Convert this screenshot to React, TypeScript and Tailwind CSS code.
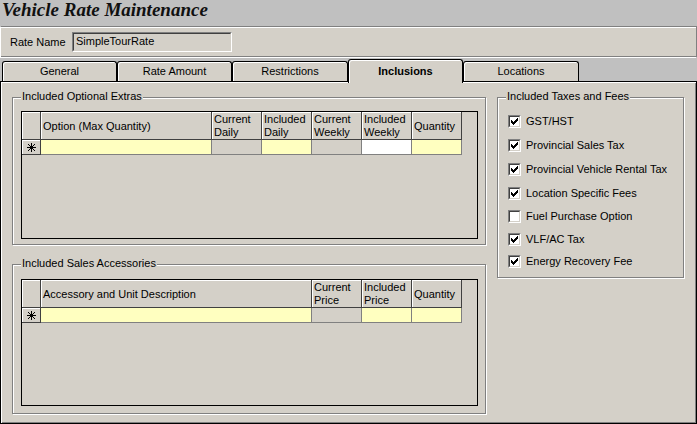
import React from "react";

function Asterisk() {
  return (
    <svg width="9" height="9" viewBox="0 0 9 9" shapeRendering="crispEdges">
      <rect x="4" y="0" width="1" height="9" fill="#000" />
      <rect x="0" y="4" width="9" height="1" fill="#000" />
      <rect x="3" y="3" width="3" height="3" fill="#000" />
      <rect x="1" y="1" width="1" height="1" fill="#000" />
      <rect x="2" y="2" width="1" height="1" fill="#000" />
      <rect x="6" y="6" width="1" height="1" fill="#000" />
      <rect x="7" y="7" width="1" height="1" fill="#000" />
      <rect x="7" y="1" width="1" height="1" fill="#000" />
      <rect x="6" y="2" width="1" height="1" fill="#000" />
      <rect x="2" y="6" width="1" height="1" fill="#000" />
      <rect x="1" y="7" width="1" height="1" fill="#000" />
    </svg>
  );
}

function Check() {
  return (
    <svg width="7" height="7" viewBox="0 0 7 7" shapeRendering="crispEdges">
      <rect x="6" y="0" width="1" height="1" fill="#000" />
      <rect x="5" y="1" width="2" height="1" fill="#000" />
      <rect x="0" y="2" width="1" height="1" fill="#000" />
      <rect x="4" y="2" width="3" height="1" fill="#000" />
      <rect x="0" y="3" width="2" height="1" fill="#000" />
      <rect x="3" y="3" width="3" height="1" fill="#000" />
      <rect x="0" y="4" width="5" height="1" fill="#000" />
      <rect x="1" y="5" width="3" height="1" fill="#000" />
      <rect x="2" y="6" width="1" height="1" fill="#000" />
    </svg>
  );
}

type Col = { label: string[]; w: string; bg: string };

const extrasCols: Col[] = [
  { label: ["Option (Max Quantity)"], w: "w-[171px]", bg: "bg-[#ffffc0]" },
  { label: ["Current", "Daily"], w: "w-[50px]", bg: "bg-[#d4d0c8]" },
  { label: ["Included", "Daily"], w: "w-[50px]", bg: "bg-[#ffffc0]" },
  { label: ["Current", "Weekly"], w: "w-[50px]", bg: "bg-[#d4d0c8]" },
  { label: ["Included", "Weekly"], w: "w-[50px]", bg: "bg-white" },
  { label: ["Quantity"], w: "w-[50px]", bg: "bg-[#ffffc0]" },
];

const accCols: Col[] = [
  { label: ["Accessory and Unit Description"], w: "w-[271px]", bg: "bg-[#ffffc0]" },
  { label: ["Current", "Price"], w: "w-[50px]", bg: "bg-[#d4d0c8]" },
  { label: ["Included", "Price"], w: "w-[50px]", bg: "bg-[#ffffc0]" },
  { label: ["Quantity"], w: "w-[50px]", bg: "bg-[#ffffc0]" },
];

function Grid({ cols, h }: { cols: Col[]; h: string }) {
  return (
    <div className={`w-[457px] ${h} border border-black bg-[#d4d0c8]`}>
      <div className="flex h-[28px]">
        <div className="w-[19px] shrink-0 border-r border-b border-[#404040] shadow-[inset_1px_1px_0_#fff]" />
        {cols.map((c, i) => (
          <div
            key={i}
            className={`${c.w} shrink-0 border-r border-b border-[#404040] shadow-[inset_1px_1px_0_#fff] flex flex-col justify-center pl-[2px] pt-[1px] leading-[13px]`}
          >
            {c.label.map((l, j) => (
              <span key={j} className="whitespace-nowrap">
                {l}
              </span>
            ))}
          </div>
        ))}
      </div>
      <div className="flex h-[15px]">
        <div className="w-[19px] shrink-0 border-r border-b border-[#404040] shadow-[inset_1px_1px_0_#fff] flex items-center justify-center">
          <Asterisk />
        </div>
        {cols.map((c, i) => (
          <div key={i} className={`${c.w} ${c.bg} shrink-0 border-r border-b border-[#808080]`} />
        ))}
      </div>
    </div>
  );
}

function GroupBox({
  label,
  className,
  children,
}: {
  label: string;
  className: string;
  children: React.ReactNode;
}) {
  return (
    <div
      className={`relative border border-[#808080] shadow-[inset_1px_1px_0_#fff,1px_1px_0_#fff] ${className}`}
    >
      <span className="absolute left-[8px] top-[-8px] bg-[#d4d0c8] px-[1px] leading-[13px] whitespace-nowrap">
        {label}
      </span>
      {children}
    </div>
  );
}

const taxes: { label: string; checked: boolean; h: string }[] = [
  { label: "GST/HST", checked: true, h: "h-[24px]" },
  { label: "Provincial Sales Tax", checked: true, h: "h-[24px]" },
  { label: "Provincial Vehicle Rental Tax", checked: true, h: "h-[24px]" },
  { label: "Location Specific Fees", checked: true, h: "h-[24px]" },
  { label: "Fuel Purchase Option", checked: false, h: "h-[23px]" },
  { label: "VLF/AC Tax", checked: true, h: "h-[22px]" },
  { label: "Energy Recovery Fee", checked: true, h: "h-[22px]" },
];

function CheckBox({ checked }: { checked: boolean }) {
  return (
    <div className="w-[13px] h-[13px] shrink-0 border border-t-[#808080] border-l-[#808080] border-b-white border-r-white">
      <div className="w-[11px] h-[11px] border border-t-[#404040] border-l-[#404040] border-b-[#d4d0c8] border-r-[#d4d0c8] bg-white flex items-center justify-center">
        {checked && <Check />}
      </div>
    </div>
  );
}

const tabs = [
  { label: "General", w: "w-[115px]" },
  { label: "Rate Amount", w: "w-[115px]" },
  { label: "Restrictions", w: "w-[116px]" },
  { label: "Inclusions", w: "w-[115px]", active: true },
  { label: "Locations", w: "w-[116px]" },
];

export default function App() {
  return (
    <div className="w-[697px] h-[424px] overflow-hidden bg-[#c0c0c0] flex flex-col font-['Liberation_Sans',Arial,sans-serif] text-[11px] text-black">
      {/* Title */}
      <div className="h-[26px] shrink-0 pl-[2px] pt-[0px]">
        <span className="font-['Liberation_Serif','Times_New_Roman',serif] font-bold italic text-[19px] leading-[20px] text-[#101010]">
          Vehicle Rate Maintenance
        </span>
      </div>

      {/* Rate name bar */}
      <div className="h-[32px] shrink-0 bg-[#d4d0c8] border-t border-[#808080] border-b border-b-white border-l border-l-white border-r border-r-[#808080] shadow-[inset_0_1px_0_#fff,inset_0_-1px_0_#808080] flex items-center pl-[9px]">
        <span className="w-[62px]">Rate Name</span>
        <div className="w-[160px] h-[20px] border border-t-[#808080] border-l-[#808080] border-b-white border-r-white">
          <div className="h-full border border-t-[#404040] border-l-[#404040] border-b-[#d4d0c8] border-r-[#d4d0c8] flex items-center pl-[2px] pb-[1px]">
            SimpleTourRate
          </div>
        </div>
      </div>

      {/* Tabs */}
      <div className="h-[23px] shrink-0 flex items-end pl-[2px] relative z-10">
        {tabs.map((t) =>
          t.active ? (
            <div
              key={t.label}
              className={`${t.w} h-[24px] mb-[-2px] bg-[#d4d0c8] border-t border-l border-r border-black rounded-t-[3px] shadow-[inset_1px_1px_0_#fff] flex items-center justify-center font-bold pb-[1px]`}
            >
              {t.label}
            </div>
          ) : (
            <div
              key={t.label}
              className={`${t.w} h-[20px] bg-[#d4d0c8] border-t border-l border-r border-black rounded-t-[3px] shadow-[inset_1px_1px_0_#fff] flex items-center justify-center`}
            >
              {t.label}
            </div>
          )
        )}
      </div>

      {/* Tab panel */}
      <div className="flex-1 bg-[#d4d0c8] border border-black shadow-[inset_1px_1px_0_#fff,inset_-1px_-1px_0_#808080] pl-[11px] pt-[15px] flex items-start">
        <div className="w-[474px] flex flex-col">
          <GroupBox label="Included Optional Extras" className="h-[148px] pl-[8px] pt-[13px]">
            <Grid cols={extrasCols} h="h-[128px]" />
          </GroupBox>
          <GroupBox label="Included Sales Accessories" className="h-[150px] mt-[19px] pl-[8px] pt-[14px]">
            <Grid cols={accCols} h="h-[127px]" />
          </GroupBox>
        </div>
        <GroupBox label="Included Taxes and Fees" className="w-[187px] h-[181px] ml-[11px] pl-[10px] pt-[11px]">
          {taxes.map((t) => (
            <div key={t.label} className={`${t.h} flex items-center gap-[5px]`}>
              <CheckBox checked={t.checked} />
              <span className="whitespace-nowrap">{t.label}</span>
            </div>
          ))}
        </GroupBox>
      </div>
    </div>
  );
}
